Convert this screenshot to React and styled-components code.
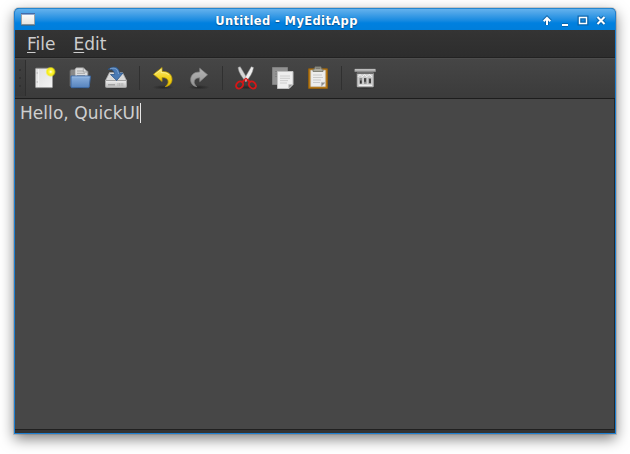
import React from "react";
import styled, { createGlobalStyle } from "styled-components";

const GlobalStyle = createGlobalStyle`
  * { box-sizing: border-box; }
  body { margin: 0; background: #fff; overflow: hidden; font-family: "DejaVu Sans", sans-serif; }
`;

const Desktop = styled.div`
  width: 630px;
  height: 454px;
  padding: 8px 14px 20px;
  background: #fff;
`;

const Window = styled.div`
  width: 602px;
  height: 426px;
  display: flex;
  flex-direction: column;
  border: 1px solid #1e7fd0;
  border-top: 0;
  border-radius: 5px 5px 0 0;
  background: #333;
  box-shadow: 0 0 0 1px rgba(70, 70, 70, 0.2), 0 5px 14px rgba(0, 0, 0, 0.5);
`;

const TitleBar = styled.header`
  height: 22px;
  flex: none;
  display: flex;
  align-items: center;
  padding: 0 7px 0 5px;
  border-radius: 4px 4px 0 0;
  border-top: 1px solid #2486cf;
  background: linear-gradient(#63b2ee 0, #4ba4e8 4px, #1c8ce1 11px, #0080df 14px, #007edb 100%);
`;

const Title = styled.h1`
  flex: 1;
  margin: 0;
  padding: 2px 3px 0 0;
  text-align: center;
  font-size: 11.5px;
  letter-spacing: 0.38px;
  line-height: 18px;
  font-weight: 700;
  color: #fff;
  text-shadow: 0 0 1px #075493, 0 1px 1px #075493;
`;

const Controls = styled.div`
  display: flex;
  gap: 4px;
`;

const ControlButton = styled.button`
  width: 14px;
  height: 14px;
  padding: 0;
  border: 0;
  background: none;
  svg { display: block; }
`;

const MenuBar = styled.nav`
  height: 27px;
  flex: none;
  display: flex;
  gap: 18px;
  padding: 0 12px;
  background: linear-gradient(#343434, #2d2d2d);
`;

const MenuItem = styled.span`
  font-size: 17px;
  line-height: 29px;
  color: #cdcdcd;
  &::first-letter { text-decoration: underline; text-underline-offset: 2px; text-decoration-thickness: 1px; }
`;

const ToolBar = styled.div`
  height: 42px;
  flex: none;
  display: flex;
  align-items: center;
  border-top: 1px solid #222;
  border-bottom: 1px solid #1d1d1d;
  box-shadow: inset 0 1px #4d4d4d;
  background: linear-gradient(#464646, #3b3b3b);
`;

const Handle = styled.div`
  width: 11px;
  height: 36px;
  display: flex;
  flex-direction: column;
  align-items: center;
  justify-content: center;
  gap: 6px;
  margin-right: 6px;
  border-right: 1px solid #2f2f2f;
  background: linear-gradient(#404040, #383838);
`;

const Dot = styled.i`
  width: 2px;
  height: 2px;
  background: #313131;
`;

const ToolGroup = styled.div`
  display: flex;
  gap: 12px;
`;

const Separator = styled.div`
  width: 1px;
  height: 24px;
  margin: 0 11px;
  background: #303030;
`;

const ToolButton = styled.button`
  width: 24px;
  height: 24px;
  padding: 0;
  border: 0;
  background: none;
  svg { display: block; overflow: visible; }
`;

const Editor = styled.main`
  flex: 1;
  display: flex;
  align-items: flex-start;
  padding: 4px 5px 0;
  background: #474747;
  border-right: 1px solid #262626;
  border-bottom: 1px solid #202020;
`;

const Line = styled.span`
  font-size: 17px;
  letter-spacing: 0.05px;
  line-height: 21px;
  color: #cfcfcf;
`;

const Caret = styled.span`
  width: 1px;
  height: 20px;
  background: #e6e6e6;
`;

const StatusBar = styled.footer`
  height: 3px;
  flex: none;
  background: #333;
`;

const Defs = () => (
  <svg width="0" height="0" display="block">
    <defs>
      <linearGradient id="paper" x2="1" y2="1"><stop stopColor="#dedede" /><stop offset="1" stopColor="#f4f4f4" /></linearGradient>
      <radialGradient id="sun"><stop stopColor="#fff" /><stop offset=".3" stopColor="#fff64a" /><stop offset=".65" stopColor="#f5ec12" /><stop offset="1" stopColor="#f5ec00" stopOpacity="0" /></radialGradient>
      <linearGradient id="folder" x2="0" y2="1"><stop stopColor="#8cb1de" /><stop offset="1" stopColor="#5683bd" /></linearGradient>
      <linearGradient id="gold" x2="0" y2="1"><stop stopColor="#f8ec7d" /><stop offset=".55" stopColor="#f2d21b" /><stop offset="1" stopColor="#e3ba00" /></linearGradient>
      <linearGradient id="silver" x2="0" y2="1"><stop stopColor="#b4b4b4" /><stop offset="1" stopColor="#949494" /></linearGradient>
      <linearGradient id="disk" x2="0" y2="1"><stop stopColor="#f0f0f0" /><stop offset="1" stopColor="#b9b9b9" /></linearGradient>
      <radialGradient id="shade"><stop stopColor="#151515" stopOpacity=".6" /><stop offset="1" stopColor="#151515" stopOpacity="0" /></radialGradient>
      <linearGradient id="app" x2="0" y2="1"><stop stopColor="#fff" /><stop offset="1" stopColor="#e4e3df" /></linearGradient>
    </defs>
  </svg>
);

const AppIcon = () => (
  <svg width="16" height="15" viewBox="0 0 16 15">
    <path d="M1.5 1.5h13v11h-13z" fill="url(#app)" stroke="#9fa2a4" />
    <path d="M1 1.5h14" stroke="#426caa" />
    <path d="M2 2.5h12" stroke="#8fa9cf" />
    <path d="M1 13.2h14" stroke="#45677f" />
  </svg>
);

const controlShapes = {
  rollUp: <path d="M7 12V5M3.7 8.2 7 4.9l3.3 3.3" />,
  minimize: <path d="M4 12h6" />,
  maximize: <path d="M3.5 4.5h7v6h-7z" />,
  close: <path d="m3.5 4 7 7m0-7-7 7" />,
};

const ControlIcon = ({ name }) => (
  <svg width="14" height="14" viewBox="0 0 14 14" fill="none">
    <g stroke="#07599b" strokeWidth="4" opacity=".75">{controlShapes[name]}</g>
    <g stroke="#fff" strokeWidth={name === "maximize" ? 1.4 : 2}>{controlShapes[name]}</g>
  </svg>
);

const ToolSvg = ({ children }) => (
  <svg width="24" height="24" viewBox="0 0 24 24" fill="none">
    {children}
  </svg>
);

const Shade = () => <ellipse cx="12" cy="21.3" rx="11" ry="2.3" fill="url(#shade)" />;

const NewIcon = () => (
  <ToolSvg>
    <Shade />
    <rect x="3.5" y="2.3" width="17" height="19.4" rx="1" fill="url(#paper)" stroke="#999" />
    <path d="M6.5 3v18" stroke="#f8f8f8" strokeWidth=".7" />
    <path d="M4.7 7h1M4.7 16h1" stroke="#999" />
    <circle cx="18.7" cy="5.8" r="5.3" fill="url(#sun)" />
  </ToolSvg>
);

const OpenIcon = () => (
  <ToolSvg>
    <Shade />
    <path d="M2 20V4.5l1.5-1h7L12 5h8v15z" fill="#888" stroke="#616161" />
    <path d="M7 13V3l1.5-1.2h7L19.7 6v7z" fill="#ddd" stroke="#969696" strokeWidth=".7" />
    <path d="M9 5h6M9 7.3h8M9 9.5h8M15.3 2v4h4" stroke="#999" strokeWidth=".8" />
    <path d="M3 10h19.5l-1.3 11q-.1.7-1 .7H4q-1 0-1-.7z" fill="url(#folder)" stroke="#3d69a4" />
    <path d="M4 11h17.5" stroke="#a5c3e8" strokeWidth=".7" />
  </ToolSvg>
);

const SaveIcon = () => (
  <ToolSvg>
    <Shade />
    <path d="m1.5 14.5 4-8h13l4 8z" fill="#d9d9d9" stroke="#a8a8a8" strokeWidth=".8" />
    <path d="M1.5 14.5h21v6q0 1-1 1h-19q-1 0-1-1z" fill="url(#disk)" stroke="#a2a2a2" />
    <path d="M4 18.8h7" stroke="#999" strokeWidth="1.2" />
    <path d="M14 17v3m1.6-3v3m1.6-3v3m1.6-3v3" stroke="#aaa" strokeWidth=".7" />
    <path d="M4 3.5C9-.2 15 .2 15.5 7H19l-6.3 7.5L6.5 8.5h4C10.5 5 8.2 2.8 4 3.5z" fill="#4a7ab4" stroke="#2c5689" strokeWidth=".8" />
    <path d="M6 2.9C10.5.9 14 3 14.5 8" stroke="#8aadd8" strokeWidth=".8" />
  </ToolSvg>
);

const turnPath = "M2 8.7 11 1.6v4.1c7-.1 10.4 3.6 10.4 8.3 0 4.2-3 7.1-7.1 7.5 2.5-1.8 3.6-4 2.9-6.3-.7-2.2-2.7-3.2-6.2-3.2v4.1z";

const UndoIcon = () => (
  <ToolSvg>
    <Shade />
    <g transform="translate(.5 0) scale(.96)">
      <path d={turnPath} fill="url(#gold)" stroke="#b99a08" strokeWidth=".8" />
      <path d="m3.5 8.7 6.6-5.1v3.1q5.5-.2 8 2.4" stroke="#fff5a4" strokeWidth=".7" />
    </g>
  </ToolSvg>
);

const RedoIcon = () => (
  <ToolSvg>
    <Shade />
    <g transform="translate(22.3 .7) scale(-.87 .93)">
      <path d={turnPath} fill="url(#silver)" stroke="#858585" strokeWidth=".8" />
    </g>
  </ToolSvg>
);

const CutIcon = () => (
  <ToolSvg>
    <Shade />
    <path d="M4 1.6 6.2.7 14 13.8l-2.2 1.8C8 11.4 5 7.4 4 1.6z" fill="#d5d5d5" stroke="#999" strokeWidth=".5" />
    <path d="M19.5 1.6 17.3.7 9.8 13.8l2.2 1.8c3.7-4.2 6.6-8.2 7.5-14z" fill="#eee" stroke="#999" strokeWidth=".5" />
    <g stroke="#d51717" strokeWidth="1.9">
      <path d="M8.2 16 12 12.7l3.9 3.3" />
      <ellipse cx="5.6" cy="19" rx="3.1" ry="3.9" transform="rotate(45 5.6 19)" />
      <ellipse cx="18.4" cy="19" rx="3.1" ry="3.9" transform="rotate(-45 18.4 19)" />
    </g>
    <circle cx="12" cy="13.8" r=".8" fill="#d99" />
  </ToolSvg>
);

const CopyIcon = () => (
  <ToolSvg>
    <path d="M2.5 1.5h15v17h-15z" fill="#929292" stroke="#808080" />
    <path d="M5 5.5h9M5 8h9M5 10.5h8" stroke="#7b7b7b" strokeWidth=".8" />
    <path d="M7.5 5.5h15.5v13l-4 4H7.5z" fill="#eee" stroke="#c0c0c0" />
    <path d="M10 10h10M10 12.3h10M10 14.6h8M10 17h7" stroke="#c8c8c8" strokeWidth=".9" />
    <path d="M18.7 22.5v-4h4z" fill="#999" stroke="#c7c7c7" strokeWidth=".7" />
  </ToolSvg>
);

const PasteIcon = () => (
  <ToolSvg>
    <path d="M2.6 2.8h18.8v19.6H2.6z" fill="#b97c1c" stroke="#93600f" />
    <path d="M4.8 4.3h14.5v16.2H4.8z" fill="#ededed" stroke="#ccc" strokeWidth=".6" />
    <path d="M7 9h9M7 11.5h10M7 14h8M7 16.5h7" stroke="#c0c0c0" strokeWidth=".8" />
    <path d="M15.3 20.4v-4h4z" fill="#888" stroke="#bbb" strokeWidth=".6" />
    <path d="M7 5.5V3.5l2-.8V.9h6v1.8l2 .8v2z" fill="#aaa99e" stroke="#7b7b70" strokeWidth=".9" />
    <path d="M9.8 2.2h4.4" stroke="#666660" />
  </ToolSvg>
);

const ShredIcon = () => (
  <ToolSvg>
    <Shade />
    <path d="M4.3 7h15.9v13.8H4.3z" fill="#cdcdcd" stroke="#b2b2b2" />
    <path d="M1.8 3.2h20.7v2.4H1.8z" fill="#aaa" stroke="#999" strokeWidth=".6" />
    <path d="M2 3.7h20" stroke="#d2d2d2" strokeWidth=".8" />
    <path d="M4 6h16.5v2H4z" fill="#6d6d6d" />
    <path d="M5 10.8 7 8.5l2.3 2.3 2.3-2.3 2.2 2.3 2.3-2.3 3.1 2.3" stroke="#f5f5f5" />
    <path d="M7.8 12v5.8M12.3 12v5.8M16.8 12v5.8" stroke="#8b8b8b" strokeWidth="2.6" />
    <path d="M7.8 14.5v3M12 12.3v3.5M17 13v4" stroke="#333" strokeWidth="1.6" />
    <path d="M6 19.3h13" stroke="#f7f7f7" />
  </ToolSvg>
);

const groups = [
  [["New", NewIcon], ["Open", OpenIcon], ["Save", SaveIcon]],
  [["Undo", UndoIcon], ["Redo", RedoIcon]],
  [["Cut", CutIcon], ["Copy", CopyIcon], ["Paste", PasteIcon]],
  [["Clear", ShredIcon]],
];

export default function App() {
  return (
    <Desktop>
      <GlobalStyle />
      <Window>
        <TitleBar>
          <AppIcon />
          <Title>Untitled - MyEditApp</Title>
          <Controls>
            {Object.keys(controlShapes).map((name) => (
              <ControlButton key={name} aria-label={name}><ControlIcon name={name} /></ControlButton>
            ))}
          </Controls>
        </TitleBar>
        <MenuBar>
          <MenuItem>File</MenuItem>
          <MenuItem>Edit</MenuItem>
        </MenuBar>
        <ToolBar>
          <Handle><Dot /><Dot /><Dot /></Handle>
          {groups.map((group, index) => (
            <React.Fragment key={index}>
              {index > 0 && <Separator />}
              <ToolGroup>
                {group.map(([label, Icon]) => (
                  <ToolButton key={label} aria-label={label}><Icon /></ToolButton>
                ))}
              </ToolGroup>
            </React.Fragment>
          ))}
        </ToolBar>
        <Editor>
          <Line>Hello, QuickUI</Line>
          <Caret />
        </Editor>
        <StatusBar />
      </Window>
      <Defs />
    </Desktop>
  );
}
